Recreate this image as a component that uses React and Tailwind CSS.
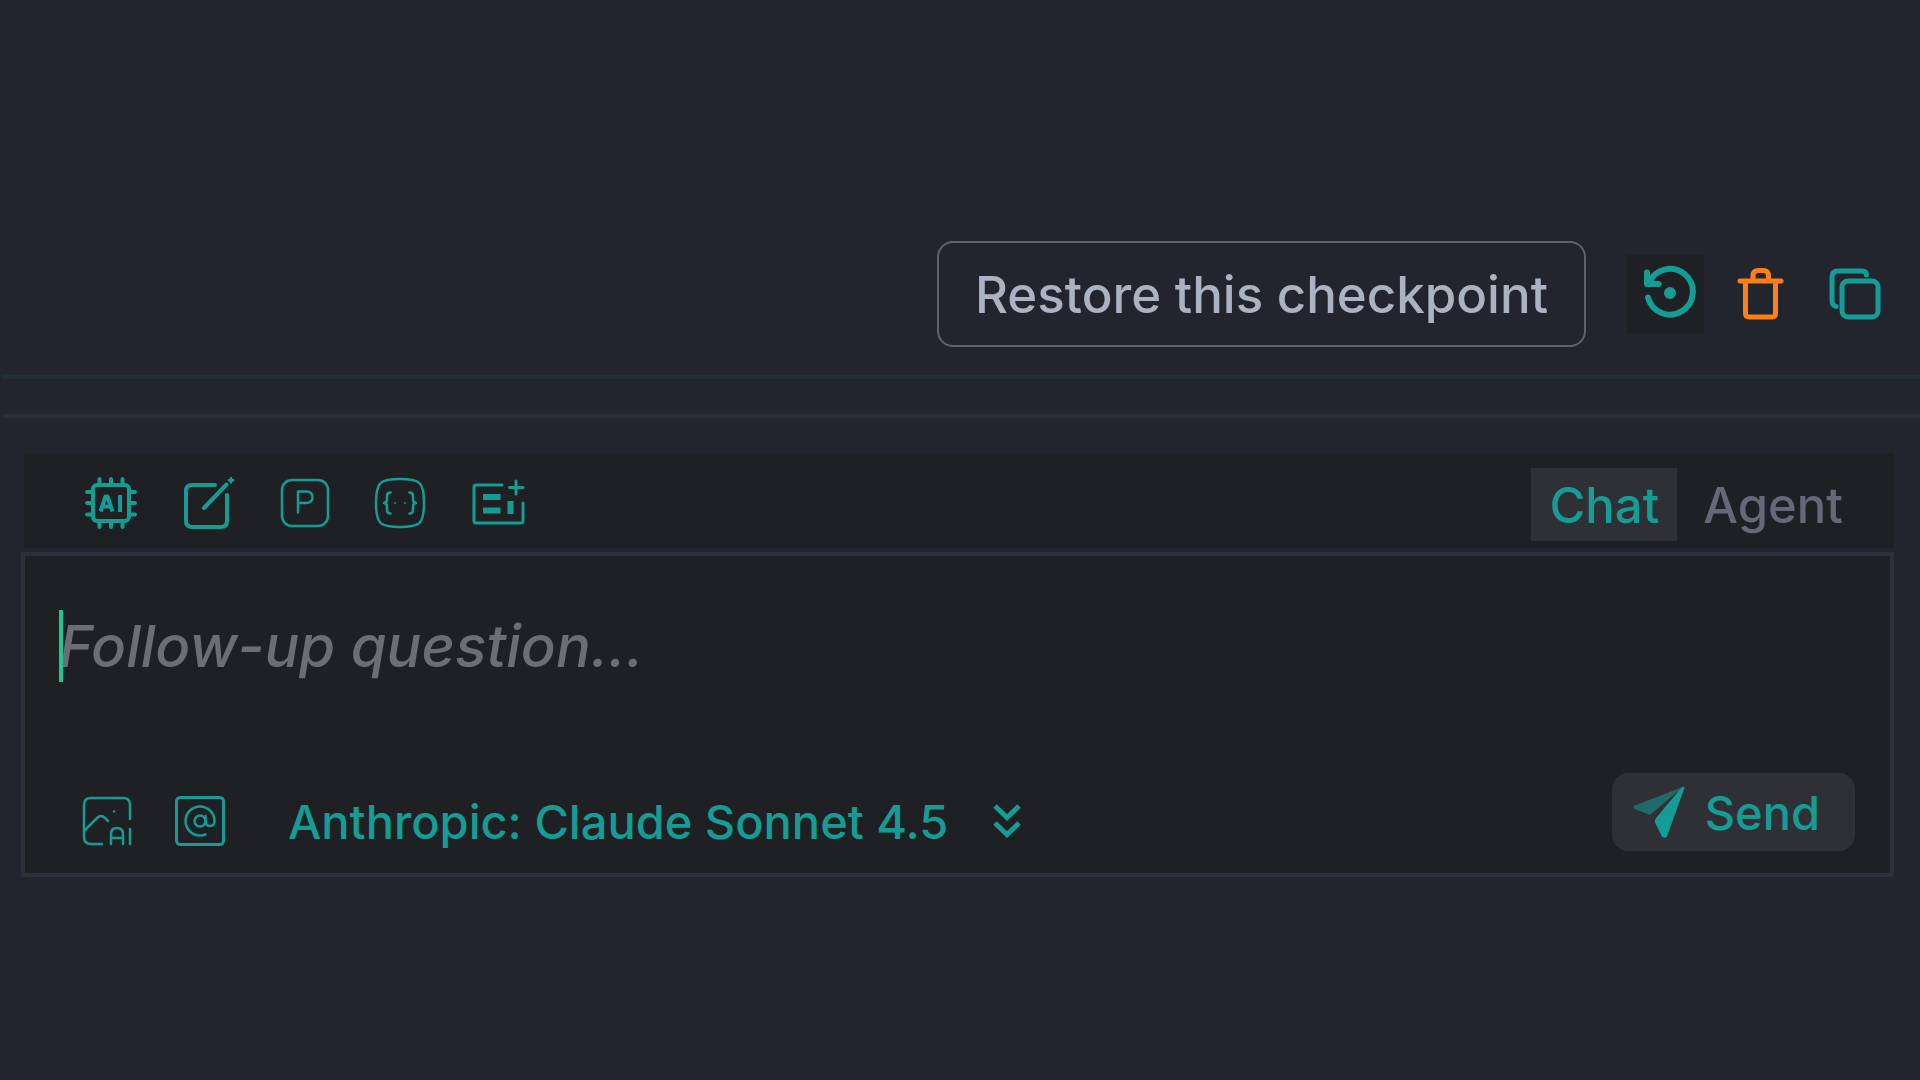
import React from "react";

const iconBase = { fill: "none", stroke: "currentColor", strokeLinecap: "round", strokeLinejoin: "round" };

function RestoreIcon() {
  return (
    <svg className="size-[60px]" viewBox="0 0 60 60" {...iconBase} strokeWidth="6" aria-hidden="true">
      <path d="M12 33.500A22.800 22.800 0 1 0 13 19" />
      <path d="M11 8.500V20H22.500" />
      <circle cx="34" cy="29" r="6" fill="currentColor" stroke="none" />
    </svg>
  );
}

function TrashIcon() {
  return (
    <svg className="w-12 h-[54px]" viewBox="0 0 48 54" {...iconBase} strokeWidth="5" aria-hidden="true">
      <path d="M4 14H45M9.500 14V46Q9.500 50 13 50H36Q39.500 50 39.500 46V14" />
      <path d="M17 13V9Q17 3.500 22.500 3.500H27Q32.500 3.500 32.500 9V13" />
    </svg>
  );
}

function CopyIcon() {
  return (
    <svg className="size-[54px]" viewBox="0 0 54 54" {...iconBase} strokeWidth="5" aria-hidden="true">
      <rect x="14" y="14" width="36" height="36" rx="6" />
      <path d="M38.500 8Q38.500 4 34 4H10Q4 4 4 10V34Q4 38 8 39.500" />
    </svg>
  );
}

function ChipIcon() {
  return (
    <svg className="size-[52px]" viewBox="0 0 52 52" {...iconBase} strokeWidth="4" aria-hidden="true">
      <rect x="8" y="8" width="36" height="36" rx="4" />
      <path d="M14.500 2V7M26 2V7M37.500 2V7M14.500 45V50M26 45V50M37.500 45V50M2 15H7M2 26H7M2 37.500H7M45 15H50M45 26H50M45 37.500H50" />
      <path d="M15.500 34.500L20.500 19.500H22.500L27.500 34.500M17.500 29.500H25.500M35 18V35" strokeLinecap="butt" />
    </svg>
  );
}

function EditIcon() {
  return (
    <svg className="size-[52px]" viewBox="0 0 52 52" {...iconBase} strokeWidth="4" aria-hidden="true">
      <path d="M32 8H9Q3 8 3 14V44Q3 50 9 50H38Q44 50 44 44V18" />
      <path d="M21 31L43.500 7.500" />
      <path d="M48 1V5.500M45.800 3.200H50.200" strokeWidth="2.500" />
    </svg>
  );
}

function PromptIcon() {
  return (
    <svg className="size-[50px]" viewBox="0 0 50 50" {...iconBase} strokeWidth="2.500" aria-hidden="true">
      <rect x="2" y="2" width="46" height="46" rx="10" />
      <path d="M18 34.500V13.500H26Q32.500 13.500 32.500 19Q32.500 25 26 25H18" />
    </svg>
  );
}

function BracesIcon() {
  return (
    <svg className="size-[52px]" viewBox="0 0 52 52" {...iconBase} strokeWidth="2.500" aria-hidden="true">
      <path d="M26 2C46 2 50 5 50 26S46 50 26 50S2 47 2 26S6 2 26 2Z" />
      <path d="M16.500 15.500Q13 15.500 13 19V22Q13 26 10 26Q13 26 13 30V33Q13 36.500 16.500 36.500M35.500 15.500Q39 15.500 39 19V22Q39 26 42 26Q39 26 39 30V33Q39 36.500 35.500 36.500" />
      <path d="M21 26H21.100M31 26H31.100" opacity="0.6" />
    </svg>
  );
}

function ContextIcon() {
  return (
    <svg className="size-[54px]" viewBox="0 0 54 54" {...iconBase} strokeWidth="3" aria-hidden="true">
      <path d="M31 9H5Q3 9 3 11V45Q3 47 5 47H50Q52 47 52 45V27M45 5V18M38.500 11.500H52" />
      <path d="M12 21H29.500M12 34.500H29.500M39.500 25V38" strokeWidth="6" strokeLinecap="butt" />
    </svg>
  );
}

function ImageAiIcon() {
  return (
    <svg className="size-[50px]" viewBox="0 0 50 50" {...iconBase} strokeWidth="2.500" aria-hidden="true">
      <path d="M20 48H9Q2 48 2 41V9Q2 2 9 2H41Q48 2 48 9V23" />
      <path d="M2 35L15 22Q19 18 23 22L26 25M32 15.500H32.100M48 33V48" />
      <path d="M29 48V38Q29 32 35 32T41 38V48M29 42H41" />
    </svg>
  );
}

function MentionIcon() {
  return (
    <svg className="size-[52px]" viewBox="0 0 52 52" {...iconBase} strokeWidth="2.500" aria-hidden="true">
      <rect x="2.500" y="2.500" width="47" height="47" rx="4" strokeWidth="3" />
      <circle cx="26" cy="26" r="5.500" />
      <path d="M31.500 21V27Q32 31 36 31Q40.500 31 40.500 26A14.500 14.500 0 1 0 26 40.500Q29 40.500 31.500 39.500" />
    </svg>
  );
}

function ChevronsIcon() {
  return (
    <svg className="w-7 h-9" viewBox="0 0 28 36" {...iconBase} strokeWidth="5" strokeLinecap="butt" strokeLinejoin="miter" aria-hidden="true">
      <path d="M2 3L14 14.500L26 3M2 20L14 31.500L26 20" />
    </svg>
  );
}

function SendIcon() {
  return (
    <svg className="size-[52px]" viewBox="0 0 52 52" fill="currentColor" aria-hidden="true">
      <path d="M2 19.500L50 1L31 17L17 29L2 23Q-1 21.500 2 19.500Z" opacity="0.55" />
      <path d="M51.500 2L34 50.500Q31.500 53 29 50.500L22 36.500Q21.500 34 23.500 31.500L49 1Q52 0 51.500 2Z" />
    </svg>
  );
}

function IconButton({ label, className = "", children }) {
  return (
    <button type="button" aria-label={label} className={`flex shrink-0 items-center justify-center ${className}`}>
      {children}
    </button>
  );
}

export default function App() {
  return (
    <main className="min-h-screen bg-[#22252e] font-['Inter','Liberation_Sans',sans-serif] text-[#149c95]">
      <header className="flex items-center justify-end pt-[241px] pr-[38px] pb-7">
        <button type="button" className="mr-[41px] h-[106px] rounded-2xl border-2 border-[#60626b] px-9 text-[51px] leading-none font-medium whitespace-nowrap text-[#abb2c1]">
          Restore this checkpoint
        </button>
        <IconButton label="Restore" className="mr-8 h-[78px] w-[77px] bg-[#1f2023]"><RestoreIcon /></IconButton>
        <IconButton label="Delete" className="mr-11 text-[#ff7f17]"><TrashIcon /></IconButton>
        <IconButton label="Copy"><CopyIcon /></IconButton>
      </header>
      <hr className="ml-[3px] border-t-4 border-[#203036]" />
      <hr className="mt-[35px] ml-[3px] border-t-4 border-[#2b2d37]" />

      <section className="mt-[35px] mr-[26px] ml-[21px]">
        <div className="ml-[3px] flex h-[95px] items-center justify-between bg-[#1f2023] pr-[51px] pl-[61px]">
          <div className="flex items-center pt-1">
            <IconButton label="AI model" className="mr-[46px]"><ChipIcon /></IconButton>
            <IconButton label="New chat" className="mr-[45px]"><EditIcon /></IconButton>
            <IconButton label="Prompts" className="mr-11"><PromptIcon /></IconButton>
            <IconButton label="Code" className="mr-[45px]"><BracesIcon /></IconButton>
            <IconButton label="Add context"><ContextIcon /></IconButton>
          </div>
          <div className="flex items-center pt-2 text-[49px] leading-none font-medium">
            <button type="button" className="h-[73px] bg-[#2f3035] px-[18px] pt-0.5">Chat</button>
            <button type="button" className="ml-[26px] pt-0.5 text-[#656878]">Agent</button>
          </div>
        </div>

        <div className="mt-1 border-4 border-[#2b303a] bg-[#1f2023]">
          <div className="relative px-[34px] pt-12">
            <input
              id="question"
              type="text"
              aria-label="Follow-up question"
              placeholder="Follow-up question..."
              className="block h-[84px] w-full bg-transparent text-[58px] font-medium italic outline-none placeholder:text-[#6d6e72]"
            />
            <span className="absolute top-[54px] left-[34px] h-[72px] w-1 bg-[#20c58f]" />
          </div>
          <div className="flex items-center justify-between pt-[85px] pr-[35px] pb-[22px] pl-[57px]">
            <div className="flex items-center pt-[18px]">
              <IconButton label="Generate image" className="mr-[42px]"><ImageAiIcon /></IconButton>
              <IconButton label="Mention" className="mr-[62px]"><MentionIcon /></IconButton>
              <button type="button" className="flex items-center gap-[45px] text-[47px] leading-none font-medium whitespace-nowrap">
                Anthropic: Claude Sonnet 4.5
                <ChevronsIcon />
              </button>
            </div>
            <button type="button" className="flex h-[78px] items-center gap-5 rounded-2xl bg-[#2f3035] pr-[35px] pl-[21px] text-[47px] leading-none font-medium">
              <SendIcon />
              Send
            </button>
          </div>
        </div>
      </section>
    </main>
  );
}
